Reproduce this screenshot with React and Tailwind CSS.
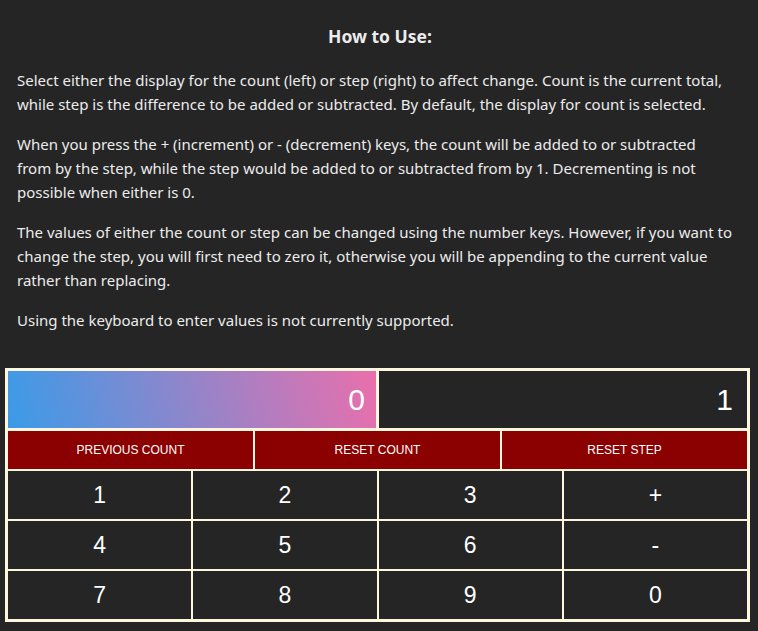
export default function App() {
  const keys = ['1', '2', '3', '+', '4', '5', '6', '-', '7', '8', '9', '0']

  return (
    <div className="min-h-screen bg-[#252525] text-[#ececec] font-['Segoe_UI','Noto_Sans',sans-serif] pb-2">
      {/* Instructions */}
      <div className="pl-[17px] pr-[25px] pt-6">
        <h3 className="text-[17.5px] leading-6 font-bold text-center mb-5 pl-[10px]">How to Use:</h3>
        <p className="text-[15px] leading-6 mb-4">
          Select either the display for the count (left) or step (right) to affect change. Count is the current total, while step is the difference to be added or subtracted. By default, the display for count is selected.
        </p>
        <p className="text-[15px] leading-6 mb-4">
          When you press the + (increment) or - (decrement) keys, the count will be added to or subtracted from by the step, while the step would be added to or subtracted from by 1. Decrementing is not possible when either is 0.
        </p>
        <p className="text-[15px] leading-6 mb-4">
          The values of either the count or step can be changed using the number keys. However, if you want to change the step, you will first need to zero it, otherwise you will be appending to the current value rather than replacing.
        </p>
        <p className="text-[15px] leading-6">
          Using the keyboard to enter values is not currently supported.
        </p>
      </div>

      {/* Calculator */}
      <div className="mt-9 ml-[5px] w-[745px] border-[3px] border-[#fdf7e0] bg-[#fdf7e0] flex flex-col gap-[2px] font-['Liberation_Sans',Arial,sans-serif] text-white">
        <div className="grid grid-cols-2 gap-[3px] h-[57px] mb-px">
          <div className="bg-linear-[75deg] from-[#3a9be8] to-[#ea6fac] flex items-center justify-end pr-[11px] text-[30px]">0</div>
          <div className="bg-[#252525] flex items-center justify-end pr-[14px] text-[30px]">1</div>
        </div>
        <div className="grid grid-cols-3 gap-[2px] h-[38px] text-[12px]">
          <button className="bg-[#8b0000] text-white">PREVIOUS COUNT</button>
          <button className="bg-[#8b0000] text-white">RESET COUNT</button>
          <button className="bg-[#8b0000] text-white">RESET STEP</button>
        </div>
        <div className="grid grid-cols-4 gap-[2px]">
          {keys.map(k => (
            <button key={k} className="bg-[#252525] h-[48px] text-[23px] text-white">{k}</button>
          ))}
        </div>
      </div>
    </div>
  )
}
